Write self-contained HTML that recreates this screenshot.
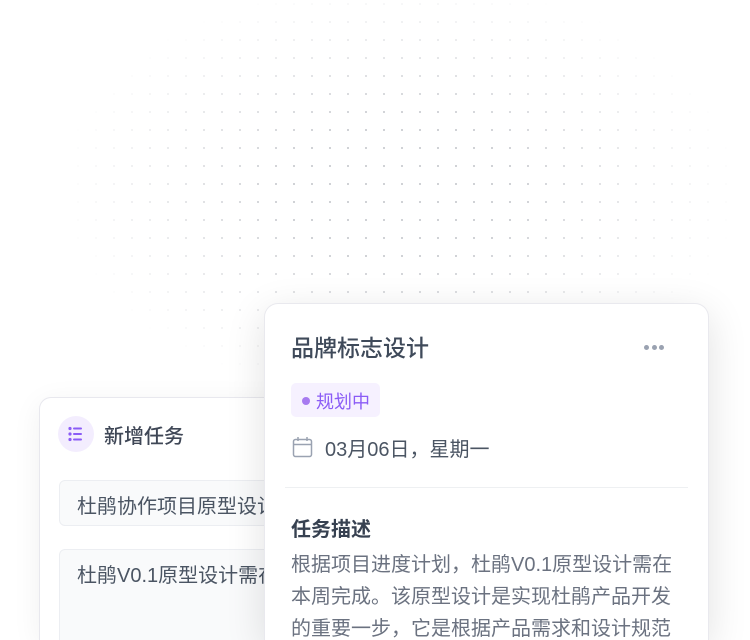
<!DOCTYPE html>
<html style="width:750px;height:640px;overflow:hidden"><head><meta charset="utf-8"><style>
*{margin:0;padding:0;box-sizing:border-box}
body{width:750px;height:640px;overflow:hidden;background:#fff;position:relative;font-family:"Liberation Sans","Noto Sans CJK SC",sans-serif}
.dots{position:absolute;left:0;top:0;width:750px;height:640px;
background-image:radial-gradient(circle,#c9cbd0 0.9px,transparent 1.2px);background-size:18px 18px;background-position:-3px -5px;
-webkit-mask-image:radial-gradient(ellipse 340px 210px at 400px 190px,#000 35%,transparent 100%);mask-image:radial-gradient(ellipse 340px 210px at 400px 190px,#000 35%,transparent 100%)}
.left{position:absolute;left:39px;top:397px;width:300px;height:243px;background:#fff;border:1px solid #e8e8ee;border-bottom:none;border-radius:12px 12px 0 0;box-shadow:0 6px 30px rgba(0,0,0,.06);overflow:hidden}
.ic{position:absolute;left:18px;top:18px;width:36px;height:36px;border-radius:50%;background:#f3edfe}
.lt{position:absolute;left:64px;top:22px;font-size:20px;color:#3f4756;font-weight:500}
.in{position:absolute;left:19px;top:82px;width:300px;height:46px;border:1px solid #eceef2;border-radius:6px;background:#f9fafb;font-size:20px;color:#4b5563;padding:9px 0 0 17px;white-space:nowrap}
.ta{top:151px;height:100px}
.card{position:absolute;left:264px;top:303px;width:445px;height:337px;background:#fff;border:1px solid #e9e9ee;border-bottom:none;border-radius:14px 14px 0 0;box-shadow:0 10px 40px rgba(0,0,0,.12);overflow:hidden}
.t{position:absolute;left:26px;top:25px;font-size:23px;color:#3f4a5a;font-weight:500}
.more{position:absolute;left:379px;top:41px;font-size:0}
.more i{display:inline-block;width:5px;height:5px;border-radius:50%;background:#9aa2b1;margin-right:2.5px}
.tag{position:absolute;left:26px;top:79px;width:89px;height:34px;border-radius:5px;background:#f6f1ff;color:#8b5cf6;font-size:18px;padding:5px 0 0 25px}
.tag:before{content:"";position:absolute;left:11px;top:14px;width:8px;height:8px;border-radius:50%;background:#a77bf0}
.date{position:absolute;left:60px;top:129px;font-size:20px;color:#4b5563}
.hr{position:absolute;left:20px;right:20px;top:183px;height:1px;background:#eef0f2}
.h{position:absolute;left:26px;top:209px;font-size:20px;font-weight:bold;color:#374151}
.p{position:absolute;left:26px;top:245px;width:390px;font-size:20px;line-height:32px;color:#6b7280}
</style></head><body>
<div class="dots"></div>
<div class="left">
<div class="ic"><svg width="36" height="36" viewBox="0 0 36 36"><g fill="#8b5cf6"><circle cx="12" cy="12.5" r="1.6"/><circle cx="12" cy="18" r="1.6"/><circle cx="12" cy="23.5" r="1.6"/><rect x="15" y="11.5" width="9" height="2" rx="1"/><rect x="15" y="17" width="9" height="2" rx="1"/><rect x="15" y="22.5" width="9" height="2" rx="1"/></g></svg></div>
<div class="lt">新增任务</div>
<div class="in">杜鹃协作项目原型设计</div>
<div class="in ta">杜鹃V0.1原型设计需在</div>
</div>
<div class="card">
<div class="t">品牌标志设计</div>
<div class="more"><i></i><i></i><i></i></div>
<div class="tag">规划中</div>
<svg style="position:absolute;left:27px;top:132px" width="21" height="22" viewBox="0 0 21 22"><rect x="1.5" y="3.5" width="18" height="17" rx="2" fill="none" stroke="#9aa2b1" stroke-width="1.5"/><line x1="1.5" y1="8.5" x2="19.5" y2="8.5" stroke="#9aa2b1" stroke-width="1.5"/><line x1="6" y1="1" x2="6" y2="5" stroke="#9aa2b1" stroke-width="1.5"/><line x1="15" y1="1" x2="15" y2="5" stroke="#9aa2b1" stroke-width="1.5"/></svg>
<div class="date">03月06日，星期一</div>
<div class="hr"></div>
<div class="h">任务描述</div>
<div class="p">根据项目进度计划，杜鹃V0.1原型设计需在本周完成。该原型设计是实现杜鹃产品开发的重要一步，它是根据产品需求和设计规范</div>
</div>
</body></html>
